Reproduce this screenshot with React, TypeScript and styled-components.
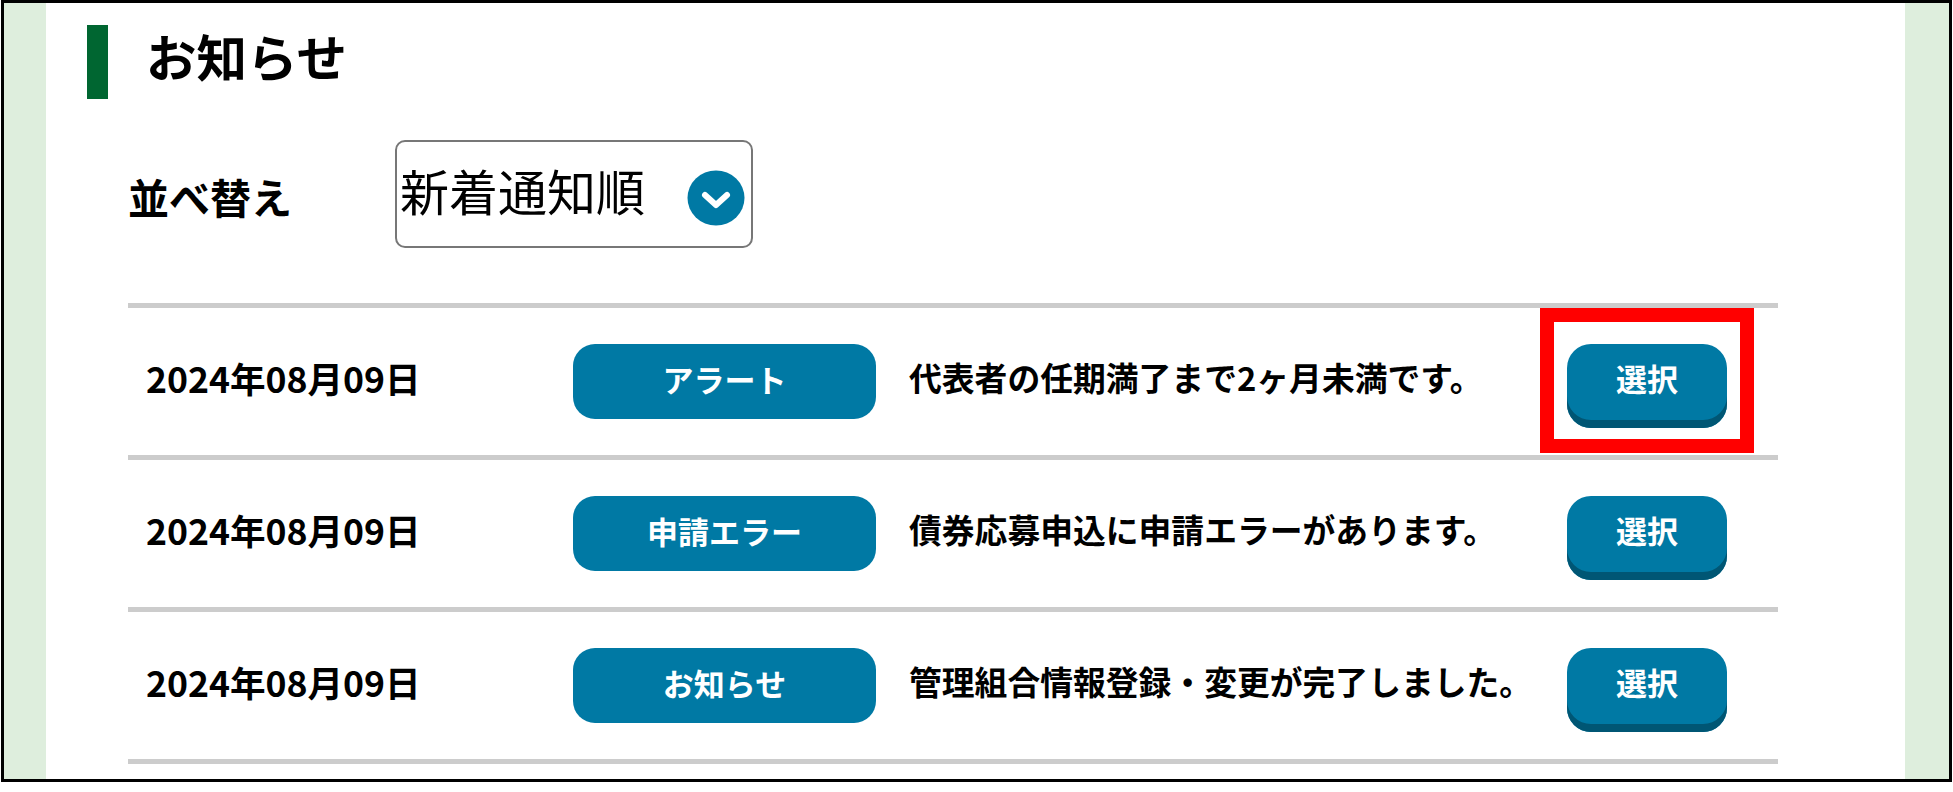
import React from "react";
import styled, { createGlobalStyle } from "styled-components";

const Global = createGlobalStyle`
  html, body { margin: 0; padding: 0; background: #fff; }
  body { font-family: "Noto Sans CJK JP", "Noto Sans", sans-serif; color: #000; }
`;

const Frame = styled.div`
  box-sizing: border-box;
  width: 1951px;
  height: 782px;
  margin-left: 1px;
  border: 3px solid #000;
  display: flex;
  overflow: hidden;
`;

const SideBand = styled.div<{ $width: number }>`
  width: ${(p) => p.$width}px;
  flex: none;
  background: #deeedd;
`;

const Main = styled.main`
  flex: 1;
  min-width: 0;
  background: #fff;
  padding: 22px 0 0 41px;
`;

const Heading = styled.div`
  display: flex;
  align-items: center;
  gap: 38px;
`;

const HeadingBar = styled.span`
  width: 21px;
  height: 74px;
  background: #006631;
`;

const HeadingText = styled.h1`
  margin: 0 0 14px;
  font-size: 50.5px;
  line-height: 60px;
  font-weight: 700;
`;

const SortRow = styled.div`
  display: flex;
  align-items: center;
  margin: 41px 0 0 41px;
`;

const SortLabel = styled.span`
  width: 267px;
  font-size: 41px;
  line-height: 48px;
  font-weight: 700;
  margin-top: 4px;
`;

const SelectBox = styled.div`
  box-sizing: border-box;
  width: 358px;
  height: 108px;
  border: 2px solid #777;
  border-radius: 10px;
  background: #fff;
  display: flex;
  align-items: center;
  justify-content: space-between;
  padding: 0 6px 0 3px;
`;

const SelectText = styled.span`
  font-size: 49px;
  line-height: 60px;
  font-weight: 400;
  margin-bottom: 8px;
`;

const SelectIcon = styled.svg`
  width: 58px;
  height: 56px;
  margin-top: 8px;
  flex: none;
`;

const List = styled.ul`
  list-style: none;
  width: 1650px;
  margin: 55px 0 0 41px;
  padding: 0;
  border-top: 5px solid #ccc;
`;

const Row = styled.li`
  box-sizing: border-box;
  height: 152px;
  border-bottom: 5px solid #ccc;
  display: grid;
  grid-template-columns: 427px 303px 691px 160px;
  align-items: center;
  padding-left: 18px;
`;

const DateText = styled.span`
  font-size: 35.6px;
  line-height: 44px;
  font-weight: 700;
  margin-bottom: 8px;
  white-space: nowrap;
`;

const Pill = styled.span`
  height: 75px;
  padding-bottom: 6px;
  box-sizing: border-box;
  border-radius: 22px;
  background: #0079a4;
  color: #fff;
  font-size: 31px;
  font-weight: 700;
  display: flex;
  align-items: center;
  justify-content: center;
`;

const Message = styled.span`
  font-size: 32.8px;
  line-height: 44px;
  font-weight: 700;
  padding-left: 33px;
  margin-bottom: 10px;
  white-space: nowrap;
`;

const ActionCell = styled.div`
  position: relative;
  margin-top: 9px;
`;

const SelectButton = styled.button`
  display: block;
  box-sizing: border-box;
  width: 160px;
  height: 84px;
  padding: 0 0 18px;
  border: none;
  border-radius: 24px;
  background: #0079a4;
  box-shadow: inset 0 -8px 0 #005674;
  color: #fff;
  font-family: inherit;
  font-size: 31px;
  font-weight: 700;
`;

const Highlight = styled.span`
  position: absolute;
  left: -27px;
  top: -36px;
  width: 214px;
  height: 145px;
  box-sizing: border-box;
  border: 14px solid #f00;
  pointer-events: none;
`;

const notices = [
  { kind: "アラート", text: "代表者の任期満了まで2ヶ月未満です。", marked: true },
  { kind: "申請エラー", text: "債券応募申込に申請エラーがあります。", marked: false },
  { kind: "お知らせ", text: "管理組合情報登録・変更が完了しました。", marked: false },
];

export default function App() {
  return (
    <>
      <Global />
      <Frame>
        <SideBand $width={42} />
        <Main>
          <Heading>
            <HeadingBar />
            <HeadingText>お知らせ</HeadingText>
          </Heading>
          <SortRow>
            <SortLabel>並べ替え</SortLabel>
            <SelectBox>
              <SelectText>新着通知順</SelectText>
              <SelectIcon viewBox="0 0 58 56" aria-hidden="true">
                <ellipse cx="29" cy="28" rx="28.5" ry="27.5" fill="#0079a4" />
                <path d="M18 25 L29 35 L40 25" fill="none" stroke="#fff" strokeWidth="6" strokeLinecap="round" strokeLinejoin="round" />
              </SelectIcon>
            </SelectBox>
          </SortRow>
          <List>
            {notices.map((n) => (
              <Row key={n.kind}>
                <DateText>2024年08月09日</DateText>
                <Pill>{n.kind}</Pill>
                <Message>{n.text}</Message>
                <ActionCell>
                  <SelectButton>選択</SelectButton>
                  {n.marked && <Highlight />}
                </ActionCell>
              </Row>
            ))}
          </List>
        </Main>
        <SideBand $width={44} />
      </Frame>
    </>
  );
}
